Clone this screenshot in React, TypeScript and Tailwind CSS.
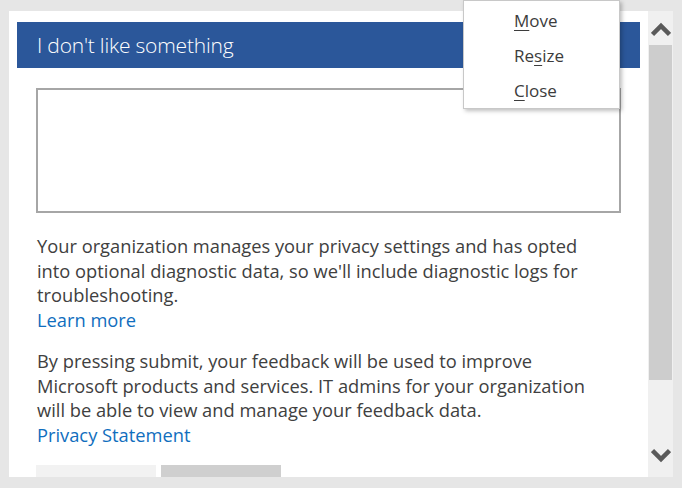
import React from "react";

const font = { fontFamily: '"Open Sans", "Noto Sans", sans-serif' };

function Chevron({ up }: { up?: boolean }) {
  return (
    <svg width="20" height="16" viewBox="0 0 20 16" className="block">
      <path
        d={up ? "M1.5 13.5 L10 5 L18.5 13.5" : "M1.5 2.5 L10 11 L18.5 2.5"}
        fill="none"
        stroke="#5a5a5a"
        strokeWidth="4.5"
        strokeLinejoin="miter"
      />
    </svg>
  );
}

export default function App() {
  return (
    <div
      className="relative w-[682px] h-[488px] bg-[#e6e6e6] overflow-hidden"
      style={font}
    >
      <div className="flex pt-[11px] pl-[9px]">
        <div className="w-[639px] h-[466px] bg-white overflow-hidden flex flex-col">
          <div className="shrink-0 ml-[8px] mt-[11px] w-[623px] h-[46px] bg-[#2b579a] flex items-center pl-[20px]">
            <span className="text-white text-[21px] font-[350] leading-none tracking-[-0.2px]">
              I don't like something
            </span>
          </div>
          <div className="shrink-0 ml-[27px] mt-[20px] w-[585px] h-[125px] border-2 border-[#a6a6a6]" />
          <div className="shrink-0 ml-[28px] mt-[21px] w-[600px] text-[18.3px] leading-[24.5px] text-[#404040]">
            <p>
              Your organization manages your privacy settings and has opted
              <br />
              into optional diagnostic data, so we'll include diagnostic logs for
              <br />
              troubleshooting.
            </p>
            <p className="text-[#106ebe]">Learn more</p>
            <p className="mt-[17px]">
              By pressing submit, your feedback will be used to improve
              <br />
              Microsoft products and services. IT admins for your organization
              <br />
              will be able to view and manage your feedback data.
            </p>
            <p className="text-[#106ebe]">Privacy Statement</p>
          </div>
          <div className="shrink-0 ml-[27px] mt-[18px] flex gap-[5px]">
            <div className="w-[120px] h-[32px] bg-[#f2f2f2]" />
            <div className="w-[120px] h-[32px] bg-[#cfcfcf]" />
          </div>
        </div>
        <div className="w-[25px] h-[466px] bg-[#f0f0f0] flex flex-col items-center">
          <div className="shrink-0 h-[34px] flex items-center justify-center pt-[2px]">
            <Chevron up />
          </div>
          <div className="shrink-0 w-[23px] h-[335px] bg-[#cdcdcd]" />
          <div className="flex-1 flex items-end justify-center pb-[13px]">
            <Chevron />
          </div>
        </div>
      </div>

      <div className="absolute left-[463px] top-0 w-[157px] h-[109px] bg-white border border-[#c8c8c8] shadow-[2px_2px_4px_rgba(0,0,0,0.25)] flex flex-col pl-[50px] pt-[2px] text-[17px] text-[#3c3c3c]">
        <div className="h-[35px] flex items-center">
          <span><span className="underline underline-offset-[3px]">M</span>ove</span>
        </div>
        <div className="h-[35px] flex items-center">
          <span>Re<span className="underline underline-offset-[3px]">s</span>ize</span>
        </div>
        <div className="h-[35px] flex items-center">
          <span><span className="underline underline-offset-[3px]">C</span>lose</span>
        </div>
      </div>
    </div>
  );
}
